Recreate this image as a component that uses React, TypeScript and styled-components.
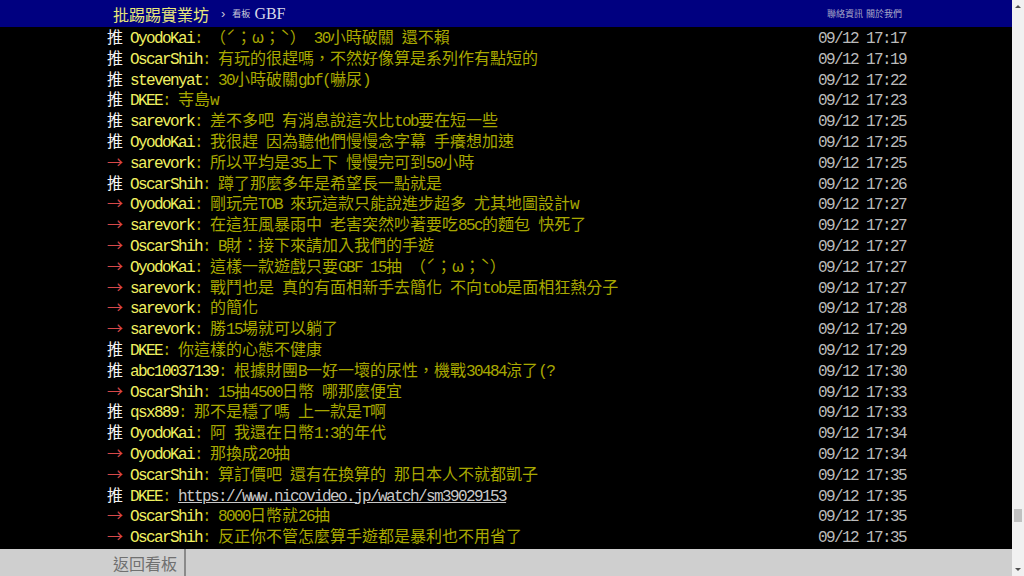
import React from 'react';
import styled, { createGlobalStyle } from 'styled-components';

type Push = {
  tag: '推' | '→';
  user: string;
  text: string;
  time: string;
  link?: boolean;
};

const pushes: Push[] = [
  { tag: '推', user: 'OyodoKai', text: '（ˊ；ω；ˋ） 30小時破關 還不賴', time: '09/12 17:17' },
  { tag: '推', user: 'OscarShih', text: '有玩的很趕嗎，不然好像算是系列作有點短的', time: '09/12 17:19' },
  { tag: '推', user: 'stevenyat', text: '30小時破關gbf(嚇尿)', time: '09/12 17:22' },
  { tag: '推', user: 'DKEE', text: '寺島w', time: '09/12 17:23' },
  { tag: '推', user: 'sarevork', text: '差不多吧 有消息說這次比tob要在短一些', time: '09/12 17:25' },
  { tag: '推', user: 'OyodoKai', text: '我很趕 因為聽他們慢慢念字幕 手癢想加速', time: '09/12 17:25' },
  { tag: '→', user: 'sarevork', text: '所以平均是35上下 慢慢完可到50小時', time: '09/12 17:25' },
  { tag: '推', user: 'OscarShih', text: '蹲了那麼多年是希望長一點就是', time: '09/12 17:26' },
  { tag: '→', user: 'OyodoKai', text: '剛玩完TOB 來玩這款只能說進步超多 尤其地圖設計w', time: '09/12 17:27' },
  { tag: '→', user: 'sarevork', text: '在這狂風暴雨中 老害突然吵著要吃85c的麵包 快死了', time: '09/12 17:27' },
  { tag: '→', user: 'OscarShih', text: 'B財：接下來請加入我們的手遊', time: '09/12 17:27' },
  { tag: '→', user: 'OyodoKai', text: '這樣一款遊戲只要GBF 15抽 （ˊ；ω；ˋ）', time: '09/12 17:27' },
  { tag: '→', user: 'sarevork', text: '戰鬥也是 真的有面相新手去簡化 不向tob是面相狂熱分子', time: '09/12 17:27' },
  { tag: '→', user: 'sarevork', text: '的簡化', time: '09/12 17:28' },
  { tag: '→', user: 'sarevork', text: '勝15場就可以躺了', time: '09/12 17:29' },
  { tag: '推', user: 'DKEE', text: '你這樣的心態不健康', time: '09/12 17:29' },
  { tag: '推', user: 'abc10037139', text: '根據財團B一好一壞的尿性，機戰30484涼了(?', time: '09/12 17:30' },
  { tag: '→', user: 'OscarShih', text: '15抽4500日幣 哪那麼便宜', time: '09/12 17:33' },
  { tag: '推', user: 'qsx889', text: '那不是穩了嗎 上一款是T啊', time: '09/12 17:33' },
  { tag: '推', user: 'OyodoKai', text: '阿 我還在日幣1:3的年代', time: '09/12 17:34' },
  { tag: '→', user: 'OyodoKai', text: '那換成20抽', time: '09/12 17:34' },
  { tag: '→', user: 'OscarShih', text: '算訂價吧 還有在換算的 那日本人不就都凱子', time: '09/12 17:35' },
  { tag: '推', user: 'DKEE', text: 'https://www.nicovideo.jp/watch/sm39029153', time: '09/12 17:35', link: true },
  { tag: '→', user: 'OscarShih', text: '8000日幣就26抽', time: '09/12 17:35' },
  { tag: '→', user: 'OscarShih', text: '反正你不管怎麼算手遊都是暴利也不用省了', time: '09/12 17:35' },
];

const GlobalStyle = createGlobalStyle`
  html, body {
    margin: 0;
    padding: 0;
    height: 100%;
    overflow: hidden;
    background: #000;
  }
  #root {
    height: 100%;
  }
`;

const Page = styled.div`
  display: flex;
  height: 100vh;
  font-family: "Noto Sans CJK TC", "Liberation Serif", serif;
`;

const Main = styled.div`
  flex: 1;
  display: flex;
  flex-direction: column;
  min-width: 0;
`;

const TopBar = styled.div`
  height: 27px;
  flex: none;
  background: #000080;
`;

const TopInner = styled.div`
  width: 800px;
  height: 100%;
  margin: 0 auto;
  padding: 0 4px 0 7px;
  box-sizing: border-box;
  display: flex;
  align-items: center;
`;

const Logo = styled.span`
  font-size: 16px;
  color: #e8e87a;
`;

const Crumb = styled.span`
  font-family: "Liberation Sans", sans-serif;
  font-size: 13px;
  color: #c8c8d8;
  margin: 0 7px 0 12px;
`;

const BoardLabel = styled.span`
  font-size: 9px;
  color: #c8c8d8;
  margin-right: 4px;
`;

const BoardName = styled.span`
  font-family: "Liberation Serif", serif;
  font-size: 16px;
  color: #d8d8e8;
`;

const TopLinks = styled.div`
  margin-left: auto;
  display: flex;
  gap: 3px;
  font-size: 9px;
  color: #a8a8c8;
`;

const Screen = styled.div`
  flex: 1;
  background: #000;
  overflow: hidden;
`;

const Column = styled.div`
  width: 800px;
  margin: -1px auto 0;
`;

const Row = styled.div`
  display: flex;
  align-items: baseline;
  height: 20.8px;
  line-height: 20.8px;
  font-size: 16px;
  white-space: pre;
`;

const Tag = styled.span<{ $arrow: boolean }>`
  width: 23px;
  margin-left: 1px;
  flex: none;
  color: ${(p) => (p.$arrow ? '#d84848' : '#f4f4f4')};
`;

const User = styled.span`
  color: #f0f060;
`;

const Content = styled.span`
  color: #a8a800;
`;

const Link = styled.span`
  color: #c8c8c8;
  text-decoration: underline;
`;

const Time = styled.span`
  margin-left: auto;
  color: #bbb;
`;

const Half = styled.span`
  font-family: "Liberation Mono", monospace;
  letter-spacing: -1.6px;
`;

const Full = styled.span`
  font-family: "Noto Sans CJK TC", sans-serif;
`;

const BottomBar = styled.div`
  height: 27px;
  flex: none;
  margin-top: auto;
  background: #cfcfcf;
`;

const BottomInner = styled.div`
  width: 800px;
  height: 100%;
  margin: 0 auto;
  display: flex;
`;

const BackLink = styled.div`
  display: flex;
  align-items: center;
  padding: 0 7px;
  font-size: 16px;
  color: #707070;
  border-right: 2px solid #8a8a8a;
`;

const ScrollBar = styled.div`
  position: relative;
  width: 12px;
  flex: none;
  background: #f1f1f1;
  display: flex;
  flex-direction: column;
  justify-content: space-between;
  align-items: center;
`;

const ArrowBtn = styled.div<{ $down?: boolean }>`
  width: 0;
  height: 0;
  margin: 5px 0;
  border-left: 3px solid transparent;
  border-right: 3px solid transparent;
  ${(p) =>
    p.$down ? 'border-top: 3px solid #505050;' : 'border-bottom: 3px solid #505050;'}
`;

const Thumb = styled.div`
  position: absolute;
  left: 2px;
  right: 2px;
  top: 509px;
  height: 13px;
  background: #c1c1c1;
`;

function Mixed({ text }: { text: string }) {
  return (
    <>
      {text
        .split(/([\x00-\x7f]+)/)
        .filter(Boolean)
        .map((s, i) =>
          /^[\x00-\x7f]/.test(s) ? <Half key={i}>{s}</Half> : <Full key={i}>{s}</Full>
        )}
    </>
  );
}

function PushRow({ push }: { push: Push }) {
  return (
    <Row>
      <Tag $arrow={push.tag === '→'}>
        <Full>{push.tag}</Full>
      </Tag>
      <User>
        <Mixed text={push.user} />
      </User>
      <Content>
        <Half>: </Half>
        {push.link ? (
          <Link>
            <Mixed text={push.text} />
          </Link>
        ) : (
          <Mixed text={push.text} />
        )}
      </Content>
      <Time>
        <Half>{push.time}</Half>
      </Time>
    </Row>
  );
}

export default function App() {
  return (
    <>
      <GlobalStyle />
      <Page>
        <Main>
          <TopBar>
            <TopInner>
              <Logo>批踢踢實業坊</Logo>
              <Crumb>›</Crumb>
              <BoardLabel>看板</BoardLabel>
              <BoardName>GBF</BoardName>
              <TopLinks>
                <span>聯絡資訊</span>
                <span>關於我們</span>
              </TopLinks>
            </TopInner>
          </TopBar>
          <Screen>
            <Column>
              {pushes.map((p, i) => (
                <PushRow key={i} push={p} />
              ))}
            </Column>
          </Screen>
          <BottomBar>
            <BottomInner>
              <BackLink>返回看板</BackLink>
            </BottomInner>
          </BottomBar>
        </Main>
        <ScrollBar>
          <ArrowBtn />
          <Thumb />
          <ArrowBtn $down />
        </ScrollBar>
      </Page>
    </>
  );
}
